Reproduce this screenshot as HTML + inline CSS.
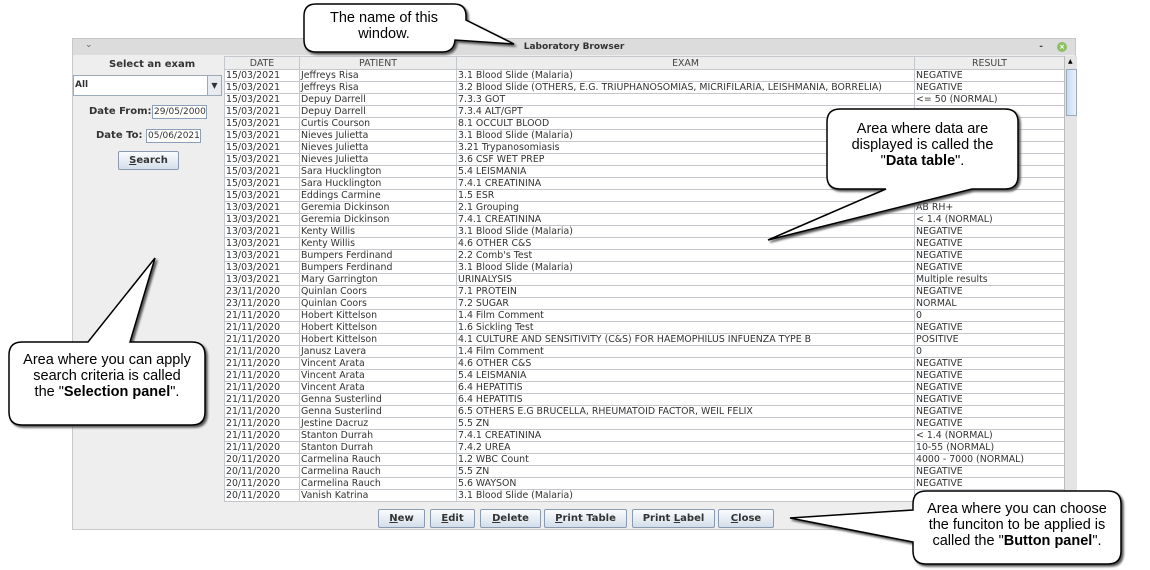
<!DOCTYPE html>
<html><head><meta charset="utf-8"><style>
body{margin:0;width:1150px;height:570px;background:#fff;position:relative;overflow:hidden;font-family:"DejaVu Sans","Liberation Sans",sans-serif}
.win{position:absolute;left:72px;top:38px;width:1004px;height:492px;background:#eeeeee;border:1px solid #c8c8c8;box-sizing:border-box}
.tb{position:absolute;left:0;top:0;width:100%;height:16px;background:#dcdcdc;font-size:9px;font-weight:bold;color:#333;text-align:center;line-height:16px}
.lbl{position:absolute;font-size:10px;font-weight:bold;color:#333}
.fld{position:absolute;height:14px;background:#fff;border:1px solid #8aa0b8;font-size:9px;color:#333;line-height:13px;padding-left:1px;box-sizing:border-box}
.btn{position:absolute;height:19px;border:1px solid #8a9ab0;border-radius:2px;background:linear-gradient(#fbfcfe,#d3deea);font-size:10px;font-weight:bold;color:#333;text-align:center;line-height:17px;box-sizing:border-box}
table{position:absolute;left:151px;top:17px;border-collapse:collapse;font-size:9.4px;color:#333;table-layout:fixed;background:#fff}
td,th{border:1px solid #c4c8cc;height:11px;padding:0 1px;white-space:nowrap;overflow:hidden;line-height:11px}
th{background:#ededed;font-weight:normal;color:#444;height:12px}
.sb{position:absolute;left:991px;top:17px;width:12px;height:449px;background:#e4e4e4;border-left:1px solid #bbb}
svg{position:absolute;left:0;top:0}
.ct{position:absolute;font-family:"Liberation Sans",Arial,sans-serif;font-size:14.5px;color:#000;text-align:center;line-height:16px}
</style></head><body>
<div class="win">
<div class="tb">Laboratory Browser<span style="position:absolute;left:12px;top:-2px;font-weight:normal;color:#666">⌄</span><span style="position:absolute;right:32px;color:#444">-</span><span style="position:absolute;right:8px;top:3px;width:10px;height:10px;border-radius:50%;background:#8cc060;color:#fff;font-size:7px;line-height:10px">×</span></div>
<div class="lbl" style="left:36px;top:20px">Select an exam</div>
<div class="fld" style="left:0;top:36px;width:149px;height:21px;font-weight:bold;line-height:19px;border-color:#9ab">All<span style="position:absolute;right:0;top:0;width:13px;height:19px;border-left:1px solid #9ab;background:#e8ecf0;font-size:8px;text-align:center">▼</span></div>
<div class="lbl" style="left:16px;top:67px">Date From:</div>
<div class="fld" style="left:79px;top:66px;width:55px">29/05/2000</div>
<div class="lbl" style="left:23px;top:91px">Date To:</div>
<div class="fld" style="left:73px;top:90px;width:55px">05/06/2021</div>
<div class="btn" style="left:45px;top:112px;width:61px"><u>S</u>earch</div>
<table>
<colgroup><col style="width:75px"><col style="width:157px"><col style="width:458px"><col style="width:150px"></colgroup>
<tr><th>DATE</th><th>PATIENT</th><th>EXAM</th><th>RESULT</th></tr>
<tr><td>15/03/2021</td><td>Jeffreys Risa</td><td>3.1 Blood Slide (Malaria)</td><td>NEGATIVE</td></tr>
<tr><td>15/03/2021</td><td>Jeffreys Risa</td><td>3.2 Blood Slide (OTHERS, E.G. TRIUPHANOSOMIAS, MICRIFILARIA, LEISHMANIA, BORRELIA)</td><td>NEGATIVE</td></tr>
<tr><td>15/03/2021</td><td>Depuy Darrell</td><td>7.3.3 GOT</td><td>&lt;= 50 (NORMAL)</td></tr>
<tr><td>15/03/2021</td><td>Depuy Darrell</td><td>7.3.4 ALT/GPT</td><td></td></tr>
<tr><td>15/03/2021</td><td>Curtis Courson</td><td>8.1 OCCULT BLOOD</td><td></td></tr>
<tr><td>15/03/2021</td><td>Nieves Julietta</td><td>3.1 Blood Slide (Malaria)</td><td></td></tr>
<tr><td>15/03/2021</td><td>Nieves Julietta</td><td>3.21 Trypanosomiasis</td><td></td></tr>
<tr><td>15/03/2021</td><td>Nieves Julietta</td><td>3.6 CSF WET PREP</td><td></td></tr>
<tr><td>15/03/2021</td><td>Sara Hucklington</td><td>5.4 LEISMANIA</td><td></td></tr>
<tr><td>15/03/2021</td><td>Sara Hucklington</td><td>7.4.1 CREATININA</td><td></td></tr>
<tr><td>15/03/2021</td><td>Eddings Carmine</td><td>1.5 ESR</td><td></td></tr>
<tr><td>13/03/2021</td><td>Geremia Dickinson</td><td>2.1 Grouping</td><td>AB RH+</td></tr>
<tr><td>13/03/2021</td><td>Geremia Dickinson</td><td>7.4.1 CREATININA</td><td>&lt; 1.4 (NORMAL)</td></tr>
<tr><td>13/03/2021</td><td>Kenty Willis</td><td>3.1 Blood Slide (Malaria)</td><td>NEGATIVE</td></tr>
<tr><td>13/03/2021</td><td>Kenty Willis</td><td>4.6 OTHER C&amp;S</td><td>NEGATIVE</td></tr>
<tr><td>13/03/2021</td><td>Bumpers Ferdinand</td><td>2.2 Comb's Test</td><td>NEGATIVE</td></tr>
<tr><td>13/03/2021</td><td>Bumpers Ferdinand</td><td>3.1 Blood Slide (Malaria)</td><td>NEGATIVE</td></tr>
<tr><td>13/03/2021</td><td>Mary Garrington</td><td>URINALYSIS</td><td>Multiple results</td></tr>
<tr><td>23/11/2020</td><td>Quinlan Coors</td><td>7.1 PROTEIN</td><td>NEGATIVE</td></tr>
<tr><td>23/11/2020</td><td>Quinlan Coors</td><td>7.2 SUGAR</td><td>NORMAL</td></tr>
<tr><td>21/11/2020</td><td>Hobert Kittelson</td><td>1.4 Film Comment</td><td>0</td></tr>
<tr><td>21/11/2020</td><td>Hobert Kittelson</td><td>1.6 Sickling Test</td><td>NEGATIVE</td></tr>
<tr><td>21/11/2020</td><td>Hobert Kittelson</td><td>4.1 CULTURE AND SENSITIVITY (C&amp;S) FOR HAEMOPHILUS INFUENZA TYPE B</td><td>POSITIVE</td></tr>
<tr><td>21/11/2020</td><td>Janusz Lavera</td><td>1.4 Film Comment</td><td>0</td></tr>
<tr><td>21/11/2020</td><td>Vincent Arata</td><td>4.6 OTHER C&amp;S</td><td>NEGATIVE</td></tr>
<tr><td>21/11/2020</td><td>Vincent Arata</td><td>5.4 LEISMANIA</td><td>NEGATIVE</td></tr>
<tr><td>21/11/2020</td><td>Vincent Arata</td><td>6.4 HEPATITIS</td><td>NEGATIVE</td></tr>
<tr><td>21/11/2020</td><td>Genna Susterlind</td><td>6.4 HEPATITIS</td><td>NEGATIVE</td></tr>
<tr><td>21/11/2020</td><td>Genna Susterlind</td><td>6.5 OTHERS E.G BRUCELLA, RHEUMATOID FACTOR, WEIL FELIX</td><td>NEGATIVE</td></tr>
<tr><td>21/11/2020</td><td>Jestine Dacruz</td><td>5.5 ZN</td><td>NEGATIVE</td></tr>
<tr><td>21/11/2020</td><td>Stanton Durrah</td><td>7.4.1 CREATININA</td><td>&lt; 1.4 (NORMAL)</td></tr>
<tr><td>21/11/2020</td><td>Stanton Durrah</td><td>7.4.2 UREA</td><td>10-55 (NORMAL)</td></tr>
<tr><td>20/11/2020</td><td>Carmelina Rauch</td><td>1.2 WBC Count</td><td>4000 - 7000 (NORMAL)</td></tr>
<tr><td>20/11/2020</td><td>Carmelina Rauch</td><td>5.5 ZN</td><td>NEGATIVE</td></tr>
<tr><td>20/11/2020</td><td>Carmelina Rauch</td><td>5.6 WAYSON</td><td>NEGATIVE</td></tr>
<tr><td>20/11/2020</td><td>Vanish Katrina</td><td>3.1 Blood Slide (Malaria)</td><td></td></tr>
</table>
<div class="sb"><div style="position:absolute;left:1px;top:13px;width:9px;height:45px;background:linear-gradient(90deg,#c8dcf0,#e8f0fa);border:1px solid #9ab"></div><div style="position:absolute;top:2px;left:3px;font-size:6px">▲</div></div>
<div class="btn" style="left:305px;top:470px;width:47px"><u>N</u>ew</div>
<div class="btn" style="left:357px;top:470px;width:45px"><u>E</u>dit</div>
<div class="btn" style="left:407px;top:470px;width:61px"><u>D</u>elete</div>
<div class="btn" style="left:471px;top:470px;width:83px"><u>P</u>rint Table</div>
<div class="btn" style="left:559px;top:470px;width:83px">Print <u>L</u>abel</div>
<div class="btn" style="left:645px;top:470px;width:56px"><u>C</u>lose</div>
</div>
<svg width="1150" height="570">
<g fill="#fff" stroke="#000" stroke-width="1.5">
<path d="M316,4 H454 Q466,4 466,16 V20 L514,44 L455,40 Q454,52 442,52 H316 Q304,52 304,40 V16 Q304,4 316,4 Z" filter="drop-shadow(2px 2px 1px #555)"/>
<path d="M840,109 H1005 Q1018,109 1018,122 V176 Q1018,189 1005,189 H972 L768,240 L886,189 H840 Q827,189 827,176 V122 Q827,109 840,109 Z" filter="drop-shadow(2px 2px 1px #555)"/>
<path d="M22,342 H88 L155,258 L130,342 H192 Q205,342 205,355 V412 Q205,425 192,425 H22 Q9,425 9,412 V355 Q9,342 22,342 Z" filter="drop-shadow(2px 2px 1px #555)"/>
<path d="M926,491 H1108 Q1121,491 1121,504 V551 Q1121,564 1108,564 H926 Q913,564 913,551 V542 L790,518 L913,510 V504 Q913,491 926,491 Z" filter="drop-shadow(2px 2px 1px #555)"/>
</g>
</svg>
<div class="ct" style="left:304px;top:10px;width:160px">The name of this<br>window.</div>
<div class="ct" style="left:827px;top:121px;width:191px">Area where data are<br>displayed is called the<br>"<b>Data table</b>".</div>
<div class="ct" style="left:9px;top:352px;width:196px">Area where you can apply<br>search criteria is called<br>the "<b>Selection panel</b>".</div>
<div class="ct" style="left:913px;top:501px;width:208px">Area where you can choose<br>the funciton to be applied is<br>called the "<b>Button panel</b>".</div>
</body></html>
